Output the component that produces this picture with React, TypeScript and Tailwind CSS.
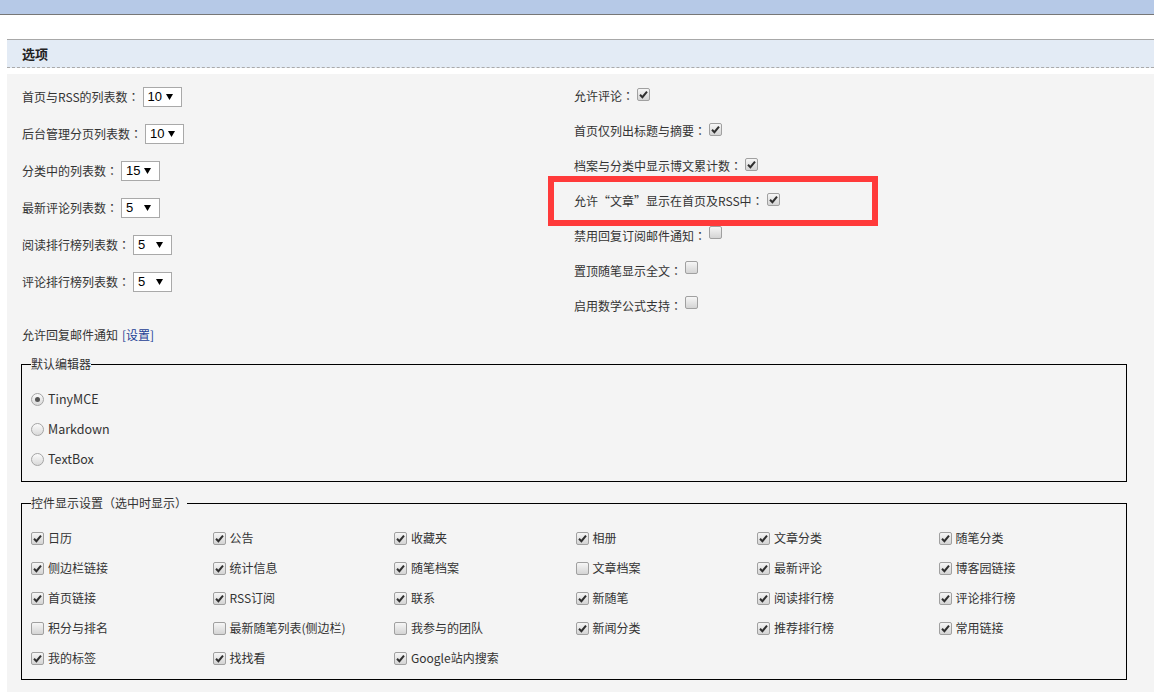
import React from "react";

const FONT = { fontFamily: '"Noto Sans CJK SC", "Liberation Sans", sans-serif' };
const TC = { fontFamily: '"Noto Sans CJK TC", "Noto Sans CJK SC", sans-serif' };

function Label({ text }: { text: string }) {
  const base = text.endsWith("：") ? text.slice(0, -1) : text;
  return (
    <span>
      {base}
      {text.endsWith("：") && <span style={TC}>：</span>}
    </span>
  );
}

function Check({ checked }: { checked: boolean }) {
  return (
    <span className="inline-flex h-[13px] w-[13px] shrink-0 items-center justify-center rounded-[2px] border border-[#a0a0a0] bg-gradient-to-b from-[#f6f6f6] to-[#d4d4d4]">
      {checked && (
        <svg width="9" height="9" viewBox="0 0 9 9">
          <path d="M1 4.8 L3.4 7.2 L8 1.6" fill="none" stroke="#2f2f2f" strokeWidth="2" />
        </svg>
      )}
    </span>
  );
}

function Radio({ checked }: { checked: boolean }) {
  return (
    <span className="inline-flex h-[13px] w-[13px] shrink-0 items-center justify-center rounded-full border border-[#a5a5a5] bg-gradient-to-b from-[#fbfbfb] to-[#d9d9d9]">
      {checked && <span className="h-[5px] w-[5px] rounded-full bg-[#555]" />}
    </span>
  );
}

function Select({ value, w }: { value: string; w: number }) {
  return (
    <span
      className="ml-[3px] inline-flex h-[20px] items-center justify-between border border-[#a9a9a9] bg-white pl-[4px] pr-[8px] text-[13px] leading-none text-black"
      style={{ width: w }}
    >
      <span style={{ fontFamily: '"Liberation Sans", sans-serif' }}>{value}</span>
      <svg width="7" height="6" viewBox="0 0 7 6">
        <path d="M0 0 H7 L3.5 6 Z" fill="#000" />
      </svg>
    </span>
  );
}

const leftRows: [string, string, number][] = [
  ["首页与RSS的列表数：", "10", 39],
  ["后台管理分页列表数：", "10", 39],
  ["分类中的列表数：", "15", 39],
  ["最新评论列表数：", "5", 39],
  ["阅读排行榜列表数：", "5", 39],
  ["评论排行榜列表数：", "5", 39],
];

const rightRows: [string, boolean][] = [
  ["允许评论：", true],
  ["首页仅列出标题与摘要：", true],
  ["档案与分类中显示博文累计数：", true],
  ["允许“文章”显示在首页及RSS中：", true],
  ["禁用回复订阅邮件通知：", false],
  ["置顶随笔显示全文：", false],
  ["启用数学公式支持：", false],
];

const widgets: [string, boolean][] = [
  ["日历", true], ["公告", true], ["收藏夹", true], ["相册", true], ["文章分类", true], ["随笔分类", true],
  ["侧边栏链接", true], ["统计信息", true], ["随笔档案", true], ["文章档案", false], ["最新评论", true], ["博客园链接", true],
  ["首页链接", true], ["RSS订阅", true], ["联系", true], ["新随笔", true], ["阅读排行榜", true], ["评论排行榜", true],
  ["积分与排名", false], ["最新随笔列表(侧边栏)", false], ["我参与的团队", false], ["新闻分类", true], ["推荐排行榜", true], ["常用链接", true],
  ["我的标签", true], ["找找看", true], ["Google站内搜索", true],
];

export default function App() {
  return (
    <div className="relative h-[692px] w-[1154px] overflow-hidden bg-white text-[12px] text-[#333]" style={FONT}>
      <div className="h-[15px] border-b border-[#777] bg-[#b6c9e7]" />
      <div className="h-[24px]" />
      <div className="ml-[7px] flex h-[29px] items-center border-t border-[#a8a8a8] border-b border-b-[#aaa] border-dashed bg-[#e3ebf5] pl-[15px]" style={{ borderTopStyle: "solid" }}>
        <span className="text-[13px] font-bold text-[#222]">选项</span>
      </div>
      <div className="h-[6px]" />
      <div className="ml-[7px] h-[620px] bg-[#f4f4f4] pl-[14px] pr-[27px]">
        <div className="flex pt-[4px]">
          <div className="w-[553px] pl-[1px]">
            {leftRows.map(([label, v, w]) => (
              <div key={label} className="flex h-[37px] items-center">
                <Label text={label} />
                <Select value={v} w={w} />
              </div>
            ))}
          </div>
          <div>
            {rightRows.map(([label, c]) => (
              <div key={label} className="flex h-[35px] items-center">
                <Label text={label} />
                <span className="-mt-[4px] ml-[3px]">
                  <Check checked={c} />
                </span>
              </div>
            ))}
          </div>
        </div>
        <div className="mt-[1px] flex h-[22px] items-center pl-[1px]">
          允许回复邮件通知 <span className="ml-[4px] text-[#1c3f94]">[设置]</span>
        </div>
        <fieldset className="mt-[9px] border border-black pb-[7px]">
          <legend className="ml-[9px] h-[18px] leading-[18px]">默认编辑器</legend>
          <div className="pl-[9px] pt-[11px]">
            {[["TinyMCE", true], ["Markdown", false], ["TextBox", false]].map(([l, c]) => (
              <div key={l as string} className="flex h-[30px] items-center gap-[4px]">
                <Radio checked={c as boolean} />
                <span className="text-[12.5px]">{l as string}</span>
              </div>
            ))}
          </div>
        </fieldset>
        <fieldset className="mt-[12px] border border-black pb-[6px]">
          <legend className="ml-[9px] h-[18px] leading-[18px]">
            控件显示设置<span style={TC}>（</span>选中时显示<span style={TC}>）</span>
          </legend>
          <div className="grid grid-cols-[repeat(6,181.5px)] pl-[9px] pt-[11px]">
            {widgets.map(([l, c]) => (
              <div key={l} className="flex h-[30px] items-center gap-[4px]">
                <Check checked={c} />
                <span>{l}</span>
              </div>
            ))}
          </div>
        </fieldset>
      </div>
      <div className="absolute left-[548px] top-[176px] h-[50px] w-[330px] border-[6px] border-[#ff3a3a]" />
    </div>
  );
}
